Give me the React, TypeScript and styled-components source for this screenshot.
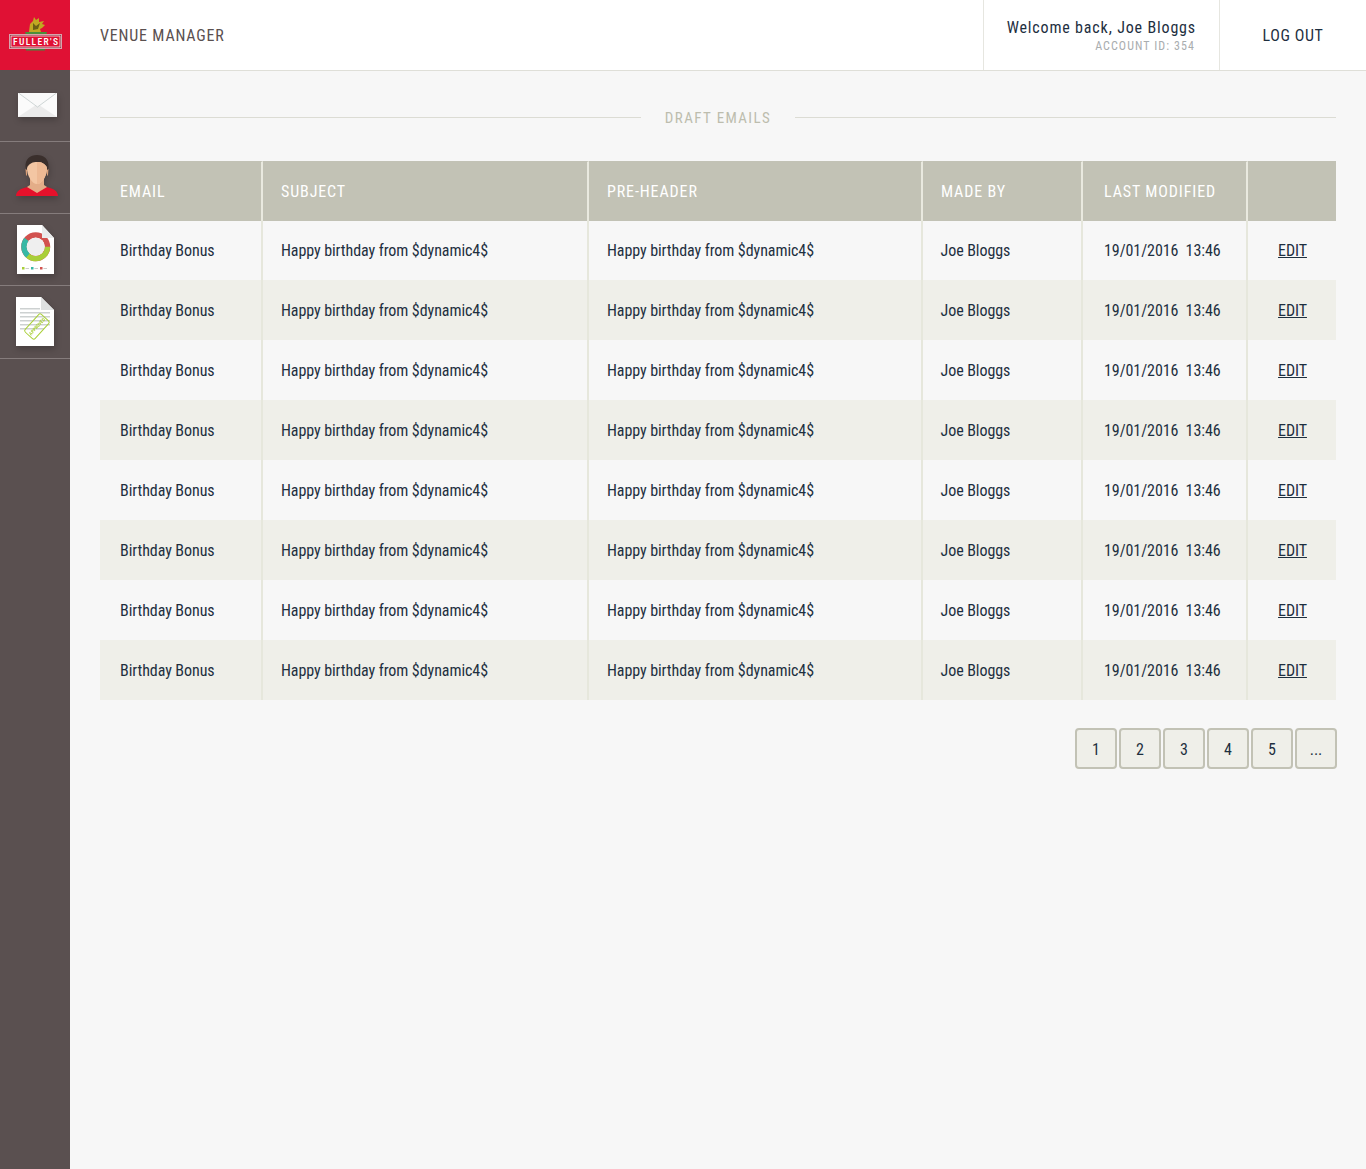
import React from "react";
import styled, { createGlobalStyle } from "styled-components";

const Global = createGlobalStyle`
  html, body { margin: 0; padding: 0; background: #f7f7f7; }
  body { font-family: Roboto, "Liberation Sans", sans-serif; font-stretch: 75%; color: #1e2f3f; }
`;
const Shell = styled.div`display: grid; grid-template-columns: 70px 1fr; min-height: 1169px;`;
const Side = styled.aside`background: #5a5050; display: flex; flex-direction: column;`;
const LogoBox = styled.div`height: 70px; background: #e01134; display: flex; align-items: flex-start; justify-content: flex-start; padding: 16px 0 0 9px; box-sizing: border-box;`;
const NavItem = styled.div<{ $left: number; $h?: number; $lift?: number }>`
  height: ${p => p.$h ?? 71}px; border-bottom: 1px solid #857c7c; display: flex; align-items: center; box-sizing: content-box;
  padding-left: ${p => p.$left}px;
  & svg { filter: drop-shadow(1px 3px 3px rgba(0, 0, 0, .22)); margin-bottom: ${p => p.$lift ?? 0}px; }
`;
const Main = styled.main`display: flex; flex-direction: column; min-width: 0;`;
const Top = styled.header`height: 70px; background: #fff; border-bottom: 1px solid #dfdfd8; display: flex; align-items: stretch;`;
const Product = styled.div`flex: 1; padding-left: 30px; display: flex; align-items: center; font-size: 16px; letter-spacing: .82px; color: #5a5050;`;
const Welcome = styled.div`width: 236px; border-left: 1px solid #e6e6e0; display: flex; flex-direction: column; align-items: flex-end; justify-content: center; padding: 5px 23px 0 0; box-sizing: border-box;`;
const Hello = styled.div`font-size: 16px; letter-spacing: .84px; line-height: 18px; font-weight: 450;`;
const Account = styled.div`font-size: 12px; letter-spacing: 1.08px; color: #a9adaf; line-height: 19px; margin-right: 1px;`;
const Logout = styled.div`width: 147px; border-left: 1px solid #e6e6e0; box-sizing: border-box; display: flex; align-items: center; justify-content: center; font-size: 16px; letter-spacing: .62px;`;
const Content = styled.div`padding: 0 30px;`;
const Heading = styled.div`
  display: flex; align-items: center; gap: 24px; height: 90px; padding-top: 2px; box-sizing: border-box; font-size: 15px; letter-spacing: 1.38px; color: #bdbdae; font-weight: 450;
  &::before, &::after { content: ""; flex: 1; height: 1px; background: #dcdcd4; }
`;
const HeadingText = styled.span`padding-top: 1px;`;
const Table = styled.table`width: 100%; border-collapse: separate; border-spacing: 0; table-layout: fixed;`;
const Th = styled.th<{ $w: number; $pad: number }>`
  width: ${p => p.$w}px; height: 60px; padding: 0 0 0 ${p => p.$pad}px; box-sizing: border-box;
  background: #c2c2b5; color: #fff; text-align: left; font-weight: 440; font-size: 16px; letter-spacing: .88px;
  border-top: 1px solid #c2c2b5; border-right: 2px solid #e9e9df;
  &:first-child { padding-left: 20px; }
  &:last-child { border-right: 0; }
`;
const Tr = styled.tr`
  &:nth-child(even) td { background: #efefe9; }
  &:nth-child(odd) td { background: #f7f7f7; }
  &:first-child td { height: 59px; }
`;
const Td = styled.td<{ $pad?: number }>`
  height: 60px; padding: 0 0 0 ${p => p.$pad ?? 18}px; box-sizing: border-box; font-size: 16px; font-weight: 430; letter-spacing: -.07px; border-right: 2px solid #e6e7dc;
  &:first-child { padding-left: 20px; }
  &:last-child { border-right: 0; padding-right: 0; padding-left: 1px; text-align: center; }
`;
const Edit = styled.a`color: #1e2f3f; text-decoration: underline;`;
const Pager = styled.nav`display: flex; justify-content: flex-end; gap: 2px; margin: 28px -1px 0 0;`;
const Page = styled.div`
  width: 42px; height: 41px; box-sizing: border-box; border: 2px solid #c2c2b5; border-radius: 4px; background: #efefe9; padding-top: 2px;
  display: flex; align-items: center; justify-content: center; font-size: 16px; font-weight: 430;
`;

const Logo = () => (
  <svg width="53" height="35" viewBox="0 0 53 35">
    <path d="M20 16l1-8 3-3 1-4 2 3 3-2v4l5-1-2 3 3 1-3 3-2 1 1 3z" fill="#c1a822" />
    <path d="M24 7l3 3 4-3-2 6-5 1z" fill="#6a5f14" />
    <path d="M16 16h22l-1 3H17z" fill="#4b8f3a" />
    <rect x="17" y="31" width="19" height="3.5" fill="#3f8c3d" />
    <rect x=".5" y="18.500" width="52" height="14" fill="#8f2a3a" stroke="#d9a3ad" />
    <rect x="2" y="20" width="49" height="11" fill="#e01134" stroke="#fff" strokeWidth=".7" />
    <text x="4" y="29" textLength="45" lengthAdjust="spacing" fontSize="9.5" fontWeight="500" fill="#fff" fontFamily="Roboto, sans-serif">FULLER'S</text>
  </svg>
);
const Mail = () => (
  <svg width="39" height="24" viewBox="0 0 39 24">
    <rect width="39" height="24" fill="#fbfbfb" />
    <path d="M0 24l19.500-13L39 24z" fill="#ebebeb" />
    <path d="M.5 0l19 14L38.500 0" fill="#f9f9f9" stroke="#bcc6c6" strokeWidth=".7" />
  </svg>
);
const Person = () => (
  <svg width="42" height="41" viewBox="0 0 42 41">
    <path d="M0 41c0-5 5-8 12-9l9 3 9-3c7 1 12 4 12 9z" fill="#e5112b" />
    <path d="M14 22h14v8l3 2-10 6-10-6 3-2z" fill="#e3ad88" />
    <path d="M9.500 12C9 4 14 0 21 0s12 4 11.500 12l-1 5-1-6H12l-1 6z" fill="#3a2f2c" />
    <path d="M9.500 14l1.500 1v6l-1-1zM32.500 14L31 15v6l1-1z" fill="#d99f78" />
    <path d="M11 13c2-5 6-6 10-6s8 1 10 6c0 8-5 16-10 16S11 21 11 13z" fill="#f3c6a3" />
    <path d="M21 7c4 0 8 1 10 6 0 8-5 16-10 16z" fill="#edb994" />
  </svg>
);
const Chart = () => (
  <svg width="37" height="49" viewBox="0 0 37 49">
    <path d="M0 0h25l12 13v36H0z" fill="#fff" />
    <circle cx="18.700" cy="21.700" r="11.800" fill="none" stroke="#d2524f" strokeWidth="5.400" />
    <path d="M30.500 21.700a11.800 11.800 0 0 1-21.200 7.200" fill="none" stroke="#a9cf39" strokeWidth="5.400" />
    <path d="M11 30.500A11.800 11.800 0 0 1 9.500 14.300" fill="none" stroke="#37b8a5" strokeWidth="5.400" />
    <circle cx="18.700" cy="21.700" r="9" fill="#efefef" />
    <path d="M25 0l12 13H25z" fill="#e9ebeb" />
    <rect x="5" y="42" width="2.500" height="2.500" fill="#a9cf39" /><rect x="8.500" y="43" width="3.500" height="1" fill="#ccc" />
    <rect x="14" y="42" width="2.500" height="2.500" fill="#37b8a5" /><rect x="17.500" y="43" width="3.500" height="1" fill="#ccc" />
    <rect x="23" y="42" width="2.500" height="2.500" fill="#d2524f" /><rect x="26.500" y="43" width="3.500" height="1" fill="#ccc" />
  </svg>
);
const Approved = () => (
  <svg width="38" height="49" viewBox="0 0 38 49">
    <path d="M0 0h25l13 13v36H0z" fill="#fff" />
    <path d="M25 0l13 13H25z" fill="#dfe1e1" />
    <g fill="#cdd1d1">
      <rect x="4" y="11" width="20" height="1.500" /><rect x="4" y="15" width="30" height="1.500" /><rect x="4" y="19" width="30" height="1.500" />
      <rect x="4" y="23" width="30" height="1.500" /><rect x="4" y="27" width="30" height="1.500" /><rect x="4" y="31" width="24" height="1.500" />
    </g>
    <g transform="rotate(-48 20.700 29.700)">
      <rect x="9" y="23" width="24" height="13.500" rx="2" fill="none" stroke="#a9cf39" />
      <text x="21" y="31.500" textAnchor="middle" fontSize="4.800" fontWeight="700" fill="#a9cf39" fontFamily="Roboto, sans-serif">APPROVED</text>
    </g>
  </svg>
);

const rows = Array.from({ length: 8 });
const cols: [string, number][] = [["EMAIL", 163], ["SUBJECT", 326], ["PRE-HEADER", 334], ["MADE BY", 160], ["LAST MODIFIED", 165], ["", 88]];

export default function App() {
  return (
    <>
      <Global />
      <Shell>
        <Side>
          <LogoBox><Logo /></LogoBox>
          <NavItem $left={18} $lift={1}><Mail /></NavItem>
          <NavItem $left={16} $lift={4}><Person /></NavItem>
          <NavItem $left={17}><Chart /></NavItem>
          <NavItem $left={16} $h={72} $lift={1}><Approved /></NavItem>
        </Side>
        <Main>
          <Top>
            <Product>VENUE MANAGER</Product>
            <Welcome><Hello>Welcome back, Joe Bloggs</Hello><Account>ACCOUNT ID: 354</Account></Welcome>
            <Logout>LOG OUT</Logout>
          </Top>
          <Content>
            <Heading><HeadingText>DRAFT EMAILS</HeadingText></Heading>
            <Table>
              <thead><tr>{cols.map(([t, w]) => <Th key={t} $w={w} $pad={t === "LAST MODIFIED" ? 21 : 18}>{t}</Th>)}</tr></thead>
              <tbody>
                {rows.map((_, i) => (
                  <Tr key={i}>
                    <Td>Birthday Bonus</Td>
                    <Td>Happy birthday from $dynamic4$</Td>
                    <Td>Happy birthday from $dynamic4$</Td>
                    <Td $pad={17.5}>Joe Bloggs</Td>
                    <Td $pad={21}>19/01/2016&nbsp;&nbsp;13:46</Td>
                    <Td><Edit>EDIT</Edit></Td>
                  </Tr>
                ))}
              </tbody>
            </Table>
            <Pager>{["1", "2", "3", "4", "5", "..."].map(p => <Page key={p}>{p}</Page>)}</Pager>
          </Content>
        </Main>
      </Shell>
    </>
  );
}
